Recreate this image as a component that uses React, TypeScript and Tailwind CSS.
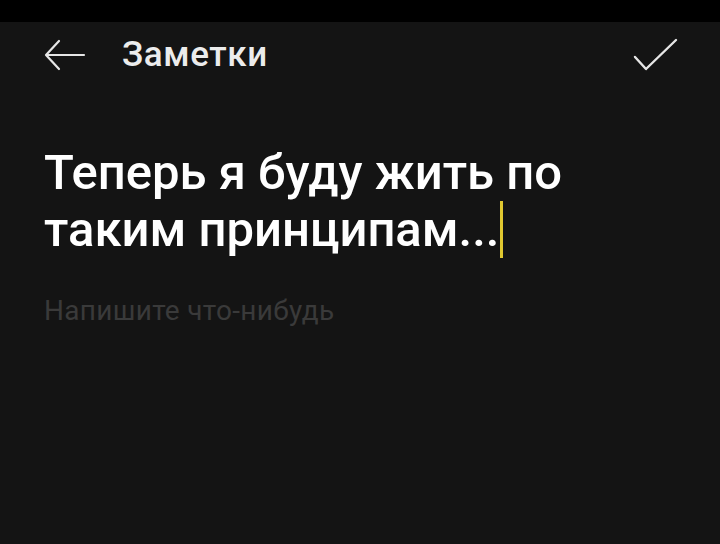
import React from 'react'

export default function App() {
  return (
    <div className="w-[720px] h-[544px] flex flex-col bg-[#141414] text-white overflow-hidden" style={{ fontFamily: 'Roboto, "Noto Sans", sans-serif' }}>
      <div className="h-[22px] bg-black" />

      <div className="h-[66px] flex items-center justify-between pl-[44px] pr-[42px]">
        <div className="flex items-center gap-[36px]">
          <svg width="42" height="34" viewBox="0 0 42 34" fill="none" stroke="#e6e6e6" strokeWidth="2.2" strokeLinecap="round" strokeLinejoin="round">
            <path d="M40 17H3" />
            <path d="M15 3L2 17l13 14" />
          </svg>
          <span className="text-[35px] font-medium tracking-[0.6px] text-[#ececec]">Заметки</span>
        </div>
        <svg width="46" height="36" viewBox="0 0 46 36" fill="none" stroke="#e6e6e6" strokeWidth="2.4" strokeLinecap="round" strokeLinejoin="round">
          <path d="M3 20l11 12L44 3" />
        </svg>
      </div>

      <div className="px-[44px] pt-[56px]">
        <div className="text-[49px] leading-[57px] font-medium text-white">
          Теперь я буду жить по<br />
          таким принципам...<span className="inline-block w-[3px] h-[57px] bg-[#e0c830] align-[-12px] ml-[1px]" />
        </div>
        <div className="mt-[32px] text-[28px] tracking-[0.3px] text-[#3a3a3a]">Напишите что-нибудь</div>
      </div>
    </div>
  )
}
